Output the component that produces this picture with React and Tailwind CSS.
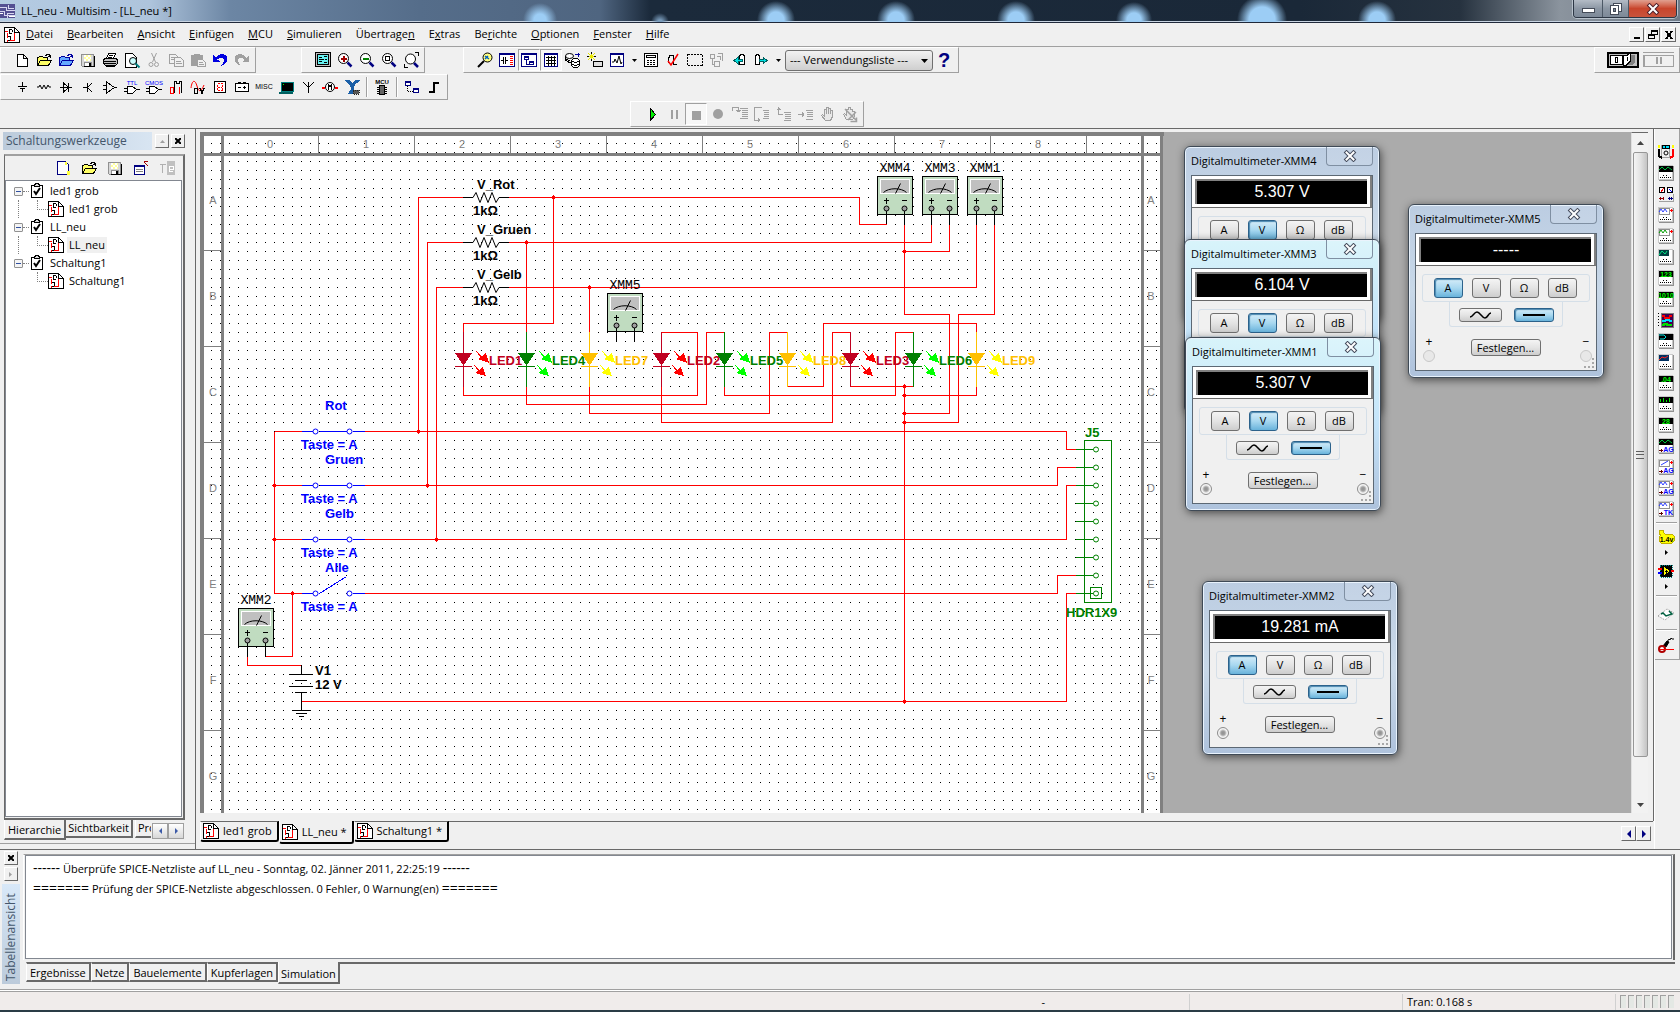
import { useState } from "react";

const RED = "#ff0000";
const BLUE = "#0000ff";
const GREEN = "#008000";

/* ---------- icons ---------- */

const Icon = ({ children, size = 16, crisp = true }) => (
  <svg
    width={size}
    height={size}
    viewBox="0 0 16 16"
    fill="none"
    stroke="#000"
    shapeRendering={crisp ? "crispEdges" : "auto"}
    aria-hidden="true"
    className="shrink-0 overflow-visible"
  >
    {children}
  </svg>
);

const SheetIcon = () => (
  <Icon>
    <path d="M.5 .5h10l5 5v10h-15z" fill="#fff" />
    <path d="M10.500 .5v5h5" />
    <path d="M1 4.500h3M3.500 6v5M10.500 6v7.500H6M3.500 13v2" stroke={RED} />
    <path d="M5 2.500h3M5.500 2v4M8.500 3v2M5 6.500h3M4 9.500h2M6.500 9v4M4 13.500h2" />
  </Icon>
);

const ClipboardIcon = () => (
  <Icon>
    <path d="M2.500 2.500h11v12h-11z" fill="#fff" strokeWidth="1" />
    <path d="M5.500 3.500v-2h1v-1h3v1h1v2z" fill="#ddd" />
    <path d="M5 8l2 3 4-6" strokeWidth="2" shapeRendering="auto" />
  </Icon>
);

const pageNew = <path d="M3.500 2.500h6l4 4v8h-10zM9.500 2.500v4h4" fill="#fff" />;

const folder = (fill, stroke) => (
  <>
    <path d="M1.500 13.500v-8h1l1-1h3l1 1h4v3" fill={fill} stroke={stroke} />
    <path d="M1.500 13.500l3-5h11l-3 5z" fill={fill} stroke={stroke} />
    <path d="M9 3.500h1v-1h3v1h1v2M12 4.500h3" stroke={stroke} />
  </>
);

const floppy = (
  <>
    <path d="M1.500 2.500h12v12h-11l-1-1z" fill="#d8d8d8" stroke="#909090" />
    <path d="M4 3h7v6H4z" fill="#ffffa0" stroke="none" />
    <path d="M4 3h2v2H4zM8 3h2v2H8zM6 5h2v2H6zM10 5h1v2h-1zM4 7h2v2H4zM8 7h2v2H8z" fill="#fff" stroke="none" />
    <path d="M4.500 14v-4h7v4" fill="#fff" stroke="#909090" />
    <path d="M9 11h2v3H9zM14 4h1v11H4v-1h10z" fill="#000" stroke="none" />
  </>
);

const lens = (inner) => (
  <>
    <circle cx="6.500" cy="6.500" r="5" fill="#fff" shapeRendering="auto" />
    {inner}
    <path d="M10.500 10.500l4 4" stroke="#000080" strokeWidth="2.500" shapeRendering="auto" />
  </>
);

const gate = (label) => (
  <>
    <path d="M3.500 7.500h5l4 3-4 4h-5zM0 9.500h3M0 12.500h3M13 10.500h3" fill="#fff" />
    <text x="8" y="6" fontSize="6" textAnchor="middle" fill={BLUE} stroke="none" fontFamily="Liberation Sans, sans-serif">
      {label}
    </text>
  </>
);

const icons = {
  newFile: pageNew,
  open: folder("#ffff66", "#000"),
  openDesign: folder("#66aaff", "#0000a0"),
  save: floppy,
  print: (
    <>
      <path d="M4.500 6.500l2-5h7l-2 5" fill="#fff" />
      <path d="M1.500 7.500l2-1h10l2 1v4l-2 2h-10l-2-2z" fill="#c0c0c0" />
      <path d="M2 9.500h12M2 11.500h12M7 3.500h4M6 5.500h4M4 14.500h9" />
    </>
  ),
  preview: (
    <>
      <path d="M1.500 1.500h7l4 4v10h-11z" fill="#fff" />
      <circle cx="9" cy="9" r="3.500" fill="#c8ffff" shapeRendering="auto" />
      <path d="M11.500 11.500l4 4" stroke="#008080" strokeWidth="2" shapeRendering="auto" />
    </>
  ),
  cut: (
    <g stroke="#a0a0a0" shapeRendering="auto">
      <path d="M5.500 1l4 9M10.500 1l-4 9" />
      <circle cx="5" cy="12.500" r="2" />
      <circle cx="10.500" cy="12.500" r="2" />
    </g>
  ),
  copy: (
    <g stroke="#a0a0a0">
      <path d="M1.500 2.500h6l2 2v7h-8zM3 5.500h4M3 7.500h4" fill="#f0f0f0" />
      <path d="M6.500 5.500h6l3 3v6h-9zM8 9.500h5M8 11.500h6" fill="#f0f0f0" />
    </g>
  ),
  paste: (
    <g stroke="#a0a0a0">
      <path d="M1.500 3.500h11v10h-11z" fill="#a0a0a0" />
      <path d="M4 2.500h6" strokeWidth="2" />
      <path d="M7.500 7.500h5l3 3v4h-8zM9 10.500h4M9 12.500h5" fill="#f0f0f0" />
    </g>
  ),
  undo: (
    <g stroke="none" fill="#0000e0">
      <path d="M1 3v7h7l-2.500-2.500C8 5 12 5 12 8c0 3-2 4-4 6 5-1 7.500-4 7.500-7C15.500 1.500 8 0 3.500 5.500z" />
    </g>
  ),
  redo: (
    <g stroke="none" fill="#a0a0a0">
      <path d="M15 3v7H8l2.500-2.500C8 5 4 5 4 8c0 3 2 4 4 6-5-1-7.500-4-7.500-7C.5 1.500 8 0 12.500 5.500z" />
    </g>
  ),
  fullView: (
    <>
      <path d="M.5 .5h15v14H.5z" fill="#c0c0c0" />
      <path d="M2.500 2.500h11v10h-11z" fill="#66f0f0" />
      <path d="M4 5.500h3M4 7.500h5M4 9.500h3M9 4.500h3M10 7.500h2M9 10.500h3" />
    </>
  ),
  zoomIn: lens(<path d="M3.500 6.500h6M6.500 3.500v6" stroke="#a00000" strokeWidth="2" />),
  zoomOut: lens(<path d="M3.500 6.500h6" stroke="#008000" strokeWidth="2" />),
  zoomArea: lens(<path d="M4.500 4.500h4v4h-4z" />),
  zoomFit: (
    <>
      <circle cx="7.500" cy="7" r="5" fill="#fff" shapeRendering="auto" />
      <path d="M11 11l4 4" stroke="#000080" strokeWidth="2.500" shapeRendering="auto" />
      <path d="M1.500 12v3h3M12 .500h3.500v3" />
    </>
  ),
  findPart: (
    <g shapeRendering="auto">
      <circle cx="10.500" cy="5.500" r="4.500" fill="#ffff80" />
      <path d="M8 4l4 3M8 7l3-3" stroke="#0060c0" strokeWidth="1.500" />
      <path d="M7 9l-6 6" strokeWidth="2" />
    </g>
  ),
  bomView: (
    <>
      <path d="M.5 1.500h15v13H.5z" fill="#fff" stroke="#000080" />
      <path d="M1 2.500h14" stroke="#000080" />
      <path d="M2 8.500h2M4.500 5v7M6.500 5v7M7 8.500h2" />
      <path d="M11 4.500h3M11 6.500h3M11 8.500h3M11 10.500h3M11 12.500h3" stroke={RED} />
    </>
  ),
  hierarchy: (
    <>
      <path d="M.5 1.500h15v13H.5z" fill="#fff" stroke="#000080" />
      <path d="M1 2.500h14" stroke="#000080" />
      <path d="M3.500 4.500h4v3h-4zM3 5.500h5M8.500 9.500h4v3h-4zM8 10.500h5M5.500 8v4h3" stroke="#000080" />
    </>
  ),
  table: (
    <>
      <path d="M1.500 1.500h13v13h-13z" fill="#fff" stroke="#000080" />
      <path d="M1 2.500h14" stroke="#000080" />
      <path d="M3 5.500h10M3 8.500h10M3 11.500h10M5.500 4v10M8.500 4v10M11.500 4v10" />
    </>
  ),
  database: (
    <>
      <ellipse cx="4.500" cy="4" rx="4" ry="2.500" fill="#fff" shapeRendering="auto" />
      <path d="M.5 4v4l3 2h3M1 7l4 2" />
      <path d="M6.500 8.500v5l2 2h4l2-2v-5l-2-2h-4zM7 9l2 1h3l2-1M7 12l2 1h3l2-1" fill="#fff" />
      <path d="M10 2.500h5M13.500 1v4" stroke="#0000a0" />
    </>
  ),
  wizard: (
    <>
      <path d="M6.500 9.500h9v5h-9z" fill="#e0e0e0" />
      <path d="M4.500 0v9M0 4.500h9M1 1l7 7M8 1l-7 7" stroke="#e8e800" />
      <path d="M4.500 0v2M4.500 7v2M0 4.500h2M7 4.500h2" />
    </>
  ),
  grapher: (
    <>
      <path d="M1.500 1.500h13v13h-13z" fill="#fff" stroke="#000080" />
      <path d="M1 2.500h14" stroke="#000080" />
      <path d="M3 10h2l1-3 2 4 2-7 2 8 1-2" shapeRendering="auto" />
    </>
  ),
  calc: (
    <>
      <path d="M1.500 1.500h13v13h-13zM3.500 3.500h9v2h-9z" fill="#fff" />
      <path d="M4 8.500h8M4 10.500h8M4 12.500h8" strokeDasharray="2 1" />
    </>
  ),
  ercCheck: (
    <>
      <path d="M3.500 11v-6h1v-2h4v3M8.500 6v6h3" />
      <path d="M3 9l3 4L13 2" stroke={RED} strokeWidth="1.500" shapeRendering="auto" />
    </>
  ),
  selectArea: <path d="M.5 2.500h15v11H.5z" strokeDasharray="2 1" />,
  gotoParent: <path d="M1.500 2.500h4v4h-4zM5.500 9.500h5v5h-5zM9 1.500h4.500v7M3.500 7v5h2M8 4.500h3v3" stroke="#a0a0a0" />,
  backAnnotate: (
    <>
      <path d="M8.500 12.500v-9h1v-1h3v1h1v9z" fill="#fff" />
      <path d="M11 7.500H7V5L3 8.500 7 12V9.500h4z" stroke="#006060" fill="#00e0e0" />
    </>
  ),
  forwardAnnotate: (
    <>
      <path d="M2.500 12.500v-9h1v-1h2v1h1v9z" fill="#fff" />
      <path d="M6 7.500h4V5l4 3.500-4 3.500V9.500H6z" stroke="#006060" fill="#00e0e0" />
    </>
  ),
  help: (
    <text x="8" y="15" fontSize="20" fontWeight="700" textAnchor="middle" fill="#000080" stroke="none" fontFamily="Liberation Sans, sans-serif">
      ?
    </text>
  ),
  source: <path d="M8.500 3v4M4 7.500h9M6 9.500h5M8.500 10v3" />,
  resistor: <path d="M1 8h2l1-2 2 4 2-4 2 4 2-4 1 2h2" shapeRendering="auto" />,
  diode: <path d="M2 8.500h12M5.500 4v9l5-4.500zM10.500 4v9" />,
  transistor: <path d="M3 8.500h4M7.500 4v9M8 8l4-4M8 9l4 4" />,
  opamp: <path d="M4.500 3v11l8-5.500zM1 6.500h4M1 10.500h4M12 8.500h3" />,
  ttl: gate("TTL"),
  cmos: gate("CMOS"),
  digital: (
    <>
      <path d="M6.500 14V2.500h2v2h3v-2h2V14" />
      <path d="M2.500 8.500h3v6h-3zM11.500 8v7" stroke={RED} strokeWidth="1.500" />
    </>
  ),
  mixed: (
    <>
      <path d="M1 9c1-8 4-9 6-2s4 6 7-1" stroke={RED} shapeRendering="auto" />
      <path d="M4.500 9.500h3v5h-3zM10 9l2 5 2-5" strokeWidth="1.500" />
    </>
  ),
  indicator: (
    <>
      <path d="M2.500 2.500h11v11h-11z" fill="#fff" />
      <path d="M5.500 4.500h5v7h-5zM6 8.500h4" stroke={RED} strokeDasharray="2 1" />
    </>
  ),
  power: <path d="M1.500 4.500h13v8h-13zM4.500 4v-1h2v1M9.500 4v-1h2v1M4 8.500h3M9 8.500h3M10.500 7v3" fill="#fff" />,
  misc: (
    <text x="8" y="10" fontSize="7" textAnchor="middle" fill="#000" stroke="none" fontFamily="Liberation Sans, sans-serif">
      MISC
    </text>
  ),
  peripherals: (
    <>
      <path d="M3 3h12v9H3z" fill="#000" stroke="#008080" />
      <path d="M1 13.500h14" stroke="#006060" strokeWidth="2" />
      <path d="M5 5.500h1" stroke="#0f0" />
    </>
  ),
  rf: <path d="M8.500 14V3M3 3l5 5M14 3l-5 5" />,
  motor: (
    <>
      <circle cx="8" cy="8" r="4.500" fill="#fff" shapeRendering="auto" />
      <path d="M6.500 11V6l1.500 2 1.500-2v5" />
      <path d="M0 8.500h3M13 8.500h3" stroke={RED} strokeWidth="2" />
    </>
  ),
  eagle: (
    <>
      <path d="M1 1l4 0 4 3 2-3h5l-1 2-3 1-2 4v5l1 2H4l3-5-1-4-4-3z" fill="#1a5fa8" stroke="none" />
      <path d="M9 11h6v4H9z" fill="#555" stroke="#222" strokeDasharray="1 1" />
    </>
  ),
  mcu: (
    <>
      <path d="M5.500 6.500h5v9h-5z" fill="#666" />
      <path d="M3 8.500h2M11 8.500h2M3 10.500h2M11 10.500h2M3 12.500h2M11 12.500h2M3 14.500h2M11 14.500h2" />
      <text x="8" y="5" fontSize="6" textAnchor="middle" fill="#000" stroke="none" fontWeight="700" fontFamily="Liberation Sans, sans-serif">
        MCU
      </text>
    </>
  ),
  hierBlock: (
    <>
      <path d="M1.500 2.500h5v4h-5zM1 3.500h6M9.500 9.500h5v4h-5zM9 10.500h6" fill="#fff" stroke="#000080" />
      <path d="M3.500 7v5.500h6" strokeDasharray="1 1" />
    </>
  ),
  bus: <path d="M3 13h5V4h5" strokeWidth="2" />,
  play: <path d="M6.500 2.500v12l5-6z" fill="#00f000" />,
  pause: <path d="M5 4h2v9H5zM10 4h2v9h-2z" fill="#a0a0a0" stroke="none" />,
  stop: <path d="M4 5h9v9H4z" fill="#a0a0a0" stroke="none" />,
  record: <circle cx="8" cy="8" r="5" fill="#a0a0a0" stroke="none" shapeRendering="auto" />,
  stepInto: <path d="M.5 5V1.500h6V6M4 4.500h5M5 5.500h3M8 2.500h8M10 4.500h6M10 6.500h6M10 8.500h6M10 10.500h6M8 12.500h8" stroke="#a0a0a0" />,
  stepOver: <path d="M8 1.500H.5v13h4M4.500 12v4M5.500 13v2M9 4.500h6M10 6.500h5M10 8.500h5M10 10.500h5M9 12.500h6" stroke="#a0a0a0" />,
  stepOut: <path d="M2.500 1v7.500h4M.5 3.500h4M1.500 2.500h2M8 6.500h7M9 8.500h6M9 10.500h6M9 12.500h6M8 14.500h7" stroke="#a0a0a0" />,
  runTo: <path d="M0 8.500h6M4.500 6v5M5.500 7v3M8 4.500h7M9 6.500h6M9 8.500h6M9 10.500h6M8 13.500h7" stroke="#a0a0a0" />,
  hand: <path d="M5.500 14.500l-4-5 1-1 2 2v-7h2v4-6h2v6-5h2v5-3h2v6l-2 4z" stroke="#a0a0a0" fill="#e8e8e8" />,
  handOff: (
    <>
      <path d="M4.500 13.500l-3-5 1-1 2 2v-6h2v-2h2v2h2v2h2v5l-2 3z" stroke="#a0a0a0" fill="#e8e8e8" />
      <path d="M3 3l11 11M14 6l-8 8M8.500 15.500h6v-4" stroke="#a0a0a0" strokeWidth="1.500" shapeRendering="auto" />
    </>
  ),
  panelNew: (
    <>
      <path d="M2.500 1.500h8l3 3v10h-11z" fill="#fff" stroke="#000080" />
      <path d="M12 11h3v4h-3zM10 2h2v3h-2z" fill="#ffff40" stroke="none" />
    </>
  ),
  newWindow: (
    <>
      <path d="M1.500 5.500h10v9h-10z" fill="#fff" stroke="#000080" />
      <path d="M1 6.500h11" stroke="#000080" />
      <path d="M3 9.500h7M3 11.500h7" stroke="#808080" />
      <path d="M15 6l-4-4M11 1.500h4" stroke="#a00000" />
    </>
  ),
  textView: (
    <>
      <path d="M8 1h8v14H8z" fill="#c0c0c0" stroke="none" />
      <path d="M1 4.500h6M3.500 5v8" stroke="#b0b0b0" />
      <path d="M10 9.500h4v-3h-4v5h4" stroke="#fff" />
    </>
  ),
};

/* ---------- toolbars ---------- */

const Band = ({ className = "", children }) => (
  <div className={`flex h-[26px] items-center border-t border-l border-r border-b border-t-white border-l-white border-r-[#a0a0a0] border-b-[#a0a0a0] pl-[10px] ${className}`}>
    {children}
  </div>
);

const ToolButton = ({ name, label, pressed }) => (
  <button
    type="button"
    title={label}
    aria-label={label}
    className={`flex h-[22px] w-[22px] shrink-0 items-center justify-center ${
      pressed ? "border border-t-[#a0a0a0] border-l-[#a0a0a0] border-r-white border-b-white bg-[#f7f7f7]" : ""
    }`}
  >
    <Icon>{icons[name]}</Icon>
  </button>
);

const DropArrow = ({ label }) => (
  <button type="button" aria-label={label} className="flex h-[22px] w-3 shrink-0 items-center justify-center">
    <svg width="5" height="3" aria-hidden="true">
      <path d="M0 0h5L2.500 3z" />
    </svg>
  </button>
);

const Separator = () => <span className="mx-[3px] h-5 w-[2px] shrink-0 border-l border-l-[#a0a0a0] border-r border-r-white" />;

const fileTools = [
  ["newFile", "Neu"], ["open", "Öffnen"], ["openDesign", "Beispiel öffnen"], ["save", "Speichern"],
  ["print", "Drucken"], ["preview", "Seitenansicht"], ["cut", "Ausschneiden"], ["copy", "Kopieren"],
  ["paste", "Einfügen"], ["undo", "Rückgängig"], ["redo", "Wiederholen"],
];
const viewTools = [
  ["fullView", "Vollbild"], ["zoomIn", "Vergrößern"], ["zoomOut", "Verkleinern"],
  ["zoomArea", "Zoombereich"], ["zoomFit", "Seite anpassen"],
];
const mainTools = [
  ["findPart", "Suchen"], ["bomView", "Stückliste"], ["hierarchy", "Schaltungswerkzeuge", true],
  ["table", "Tabellenansicht", true], ["database", "Datenbank"], ["wizard", "Assistent"], ["grapher", "Graph"],
];
const mainTools2 = [
  ["calc", "Postprozessor"], ["ercCheck", "Regelprüfung"], ["selectArea", "Bereich"],
  ["gotoParent", "Übergeordnet"], ["backAnnotate", "Rückannotation"], ["forwardAnnotate", "Vorwärtsannotation"],
];
const partTools = [
  ["source", "Quelle"], ["resistor", "Passiv"], ["diode", "Diode"], ["transistor", "Transistor"],
  ["opamp", "Analog"], ["ttl", "TTL"], ["cmos", "CMOS"], ["digital", "Digital"], ["mixed", "Gemischt"],
  ["indicator", "Anzeige"], ["power", "Leistung"], ["misc", "Sonstige"], ["peripherals", "Peripherie"],
  ["rf", "HF"], ["motor", "Elektromechanik"], ["eagle", "NI"],
];
const simTools = [
  ["play", "Start"], ["pause", "Pause"], ["stop", "Stopp", true], ["record", "Aufnahme"],
  ["stepInto", "Einzelschritt"], ["stepOver", "Prozedurschritt"], ["stepOut", "Rücksprung"],
  ["runTo", "Bis Cursor"], ["hand", "Haltepunkt"], ["handOff", "Haltepunkte entfernen"],
];

const tools = (list) => list.map(([name, label, pressed]) => <ToolButton key={name} name={name} label={label} pressed={pressed} />);

const Toolbars = () => (
  <div className="border-b border-b-[#696969]">
    <div className="flex h-[27px]">
      <Band className="w-64">{tools(fileTools)}</Band>
      <Band className="ml-[45px] w-[124px]">{tools(viewTools)}</Band>
      <Band className="ml-[38px] w-[496px]">
        {tools(mainTools)}
        <DropArrow label="Graphen" />
        {tools(mainTools2)}
        <DropArrow label="Annotationen" />
        <div className="relative ml-px flex">
          <select
            aria-label="Verwendungsliste"
            className="h-[21px] w-[148px] appearance-none rounded-[3px] border border-[#707070] bg-gradient-to-b from-[#f2f2f2] to-[#cfcfcf] pl-1 text-[11px] leading-[18px]"
          >
            <option>--- Verwendungsliste ---</option>
          </select>
          <svg width="7" height="4" className="pointer-events-none absolute top-[9px] right-[5px]" aria-hidden="true">
            <path d="M0 0h7L3.500 4z" />
          </svg>
        </div>
        <ToolButton name="help" label="Hilfe" />
      </Band>
      <Band className="ml-auto w-[86px] !pl-3">
        <button type="button" aria-label="Simulation ein/aus">
          <svg width="32" height="16" shapeRendering="crispEdges" aria-hidden="true">
            <path d="M1 1h30v14H1z" fill="#c0c0c0" stroke="#000" strokeWidth="2" />
            <path d="M3.500 3.500h12v9h-12z" fill="#fff" stroke="#000" />
            <path d="M16 3.500h4l3-3v9l-4 4h-3z" fill="#fff" stroke="#000" />
            <path d="M24 3h4v8l-3 2h-5l4-4z" fill="#808080" />
            <path d="M8.500 5.500h2v5h-2zM20.500 5v4" fill="none" stroke="#000" />
          </svg>
        </button>
        <button type="button" aria-label="Simulation anhalten" className="ml-1">
          <svg width="31" height="16" shapeRendering="crispEdges" aria-hidden="true">
            <path d="M0 .5h31M.5 3.500h30v11H.5zM1.500 4v10" fill="none" stroke="#a0a0a0" />
            <path d="M13 5h2v7h-2zM17 5h2v7h-2z" fill="#a0a0a0" />
          </svg>
        </button>
      </Band>
    </div>
    <div className="flex h-[27px]">
      <Band className="w-[448px]">
        {tools(partTools)}
        <Separator />
        <ToolButton name="mcu" label="MCU" />
        <Separator />
        <ToolButton name="hierBlock" label="Hierarchieblock" />
        <ToolButton name="bus" label="Bus" />
      </Band>
    </div>
    <div className="flex h-[27px]">
      <Band className="ml-[630px] w-[234px]">{tools(simTools)}</Band>
    </div>
  </div>
);

/* ---------- title + menu ---------- */

const CloseCross = ({ outline }) => (
  <svg width="14" height="12" aria-hidden="true">
    <path d="M3.500 2.500l7 7M10.500 2.500l-7 7" stroke={outline} strokeWidth="4" strokeLinecap="square" />
    <path d="M3.500 2.500l7 7M10.500 2.500l-7 7" stroke="#fff" strokeWidth="2" strokeLinecap="square" />
  </svg>
);

const TitleBar = () => (
  <header className="flex h-[23px] items-start border-b border-b-[#20293a] bg-[linear-gradient(90deg,#b4cbe2_0,#aec4dc_150px,#6c86a4_230px,#556d8a_420px,#4f6580_600px,#1b2a3b_650px,#1a2838_1300px,#26323f_1460px,#8b949e_1560px,#6f7b88_100%)] shadow-[inset_0_-1px_0_#c8d4e2]">
    <div className="flex h-full min-w-0 flex-1 items-center bg-[radial-gradient(circle_at_540px_20px,#9ccdf5_6px,transparent_17px),radial-gradient(circle_at_660px_22px,#7a9cbc_2px,transparent_9px),radial-gradient(circle_at_776px_20px,#9ccdf5_8px,transparent_19px),radial-gradient(circle_at_896px_20px,#9ccdf5_8px,transparent_19px),radial-gradient(circle_at_1016px_20px,#9ccdf5_8px,transparent_19px),radial-gradient(circle_at_1134px_20px,#9ccdf5_7px,transparent_18px),radial-gradient(circle_at_1262px_20px,#9ccdf5_13px,transparent_25px),radial-gradient(circle_at_1377px_20px,#9ccdf5_8px,transparent_19px)]">
      <svg width="16" height="16" shapeRendering="crispEdges" aria-hidden="true">
        <path d="M0 1h15v14H0z" fill="#544f92" />
        <path d="M0 4.500h6v3h9M0 8.500h4v4h11M8 2v3h6M7 15v-5h7" fill="none" stroke="#d8d6f0" />
        <path d="M0 10.500h3M9 13.500h6" stroke="#fff" />
      </svg>
      <h1 className="ml-[5px] pb-px text-[11px] leading-4">LL_neu - Multisim - [LL_neu *]</h1>
    </div>
    <div className="mr-[3px] flex h-[18px] shrink-0 overflow-hidden rounded-b-[4px] border border-t-0 border-[#2c3644] shadow-[0_0_0_1px_#b8c2cc]">
      <button type="button" aria-label="Minimieren" className="flex w-[29px] items-center justify-center border-r border-r-[#4c5866] bg-gradient-to-b from-[#b4bcc6] via-[#8c97a4] to-[#7d8998]">
        <span className="mt-1 h-[5px] w-[13px] border border-[#444b58] bg-white" />
      </button>
      <button type="button" aria-label="Verkleinern" className="flex w-[26px] items-center justify-center border-r border-r-[#4c5866] bg-gradient-to-b from-[#b4bcc6] via-[#8c97a4] to-[#7d8998]">
        <svg width="12" height="12" shapeRendering="crispEdges" aria-hidden="true">
          <path d="M3.500 .5h8v8h-8z" fill="#fff" stroke="#444b58" />
          <path d="M.5 2.500h8v9h-8z" fill="#fff" stroke="#444b58" />
          <path d="M3.500 5.500h2v3h-2z" fill="#7d8998" stroke="#444b58" />
        </svg>
      </button>
      <button type="button" aria-label="Schließen" className="flex w-[47px] items-center justify-center bg-gradient-to-b from-[#e0a090] via-[#c8452c] to-[#c8533c]">
        <CloseCross outline="#50202a" />
      </button>
    </div>
  </header>
);

const menus = [
  ["", "D", "atei"], ["", "B", "earbeiten"], ["", "A", "nsicht"], ["", "E", "infügen"], ["", "M", "CU"],
  ["", "S", "imulieren"], ["Übertrage", "n", ""], ["E", "x", "tras"], ["Be", "r", "ichte"],
  ["", "O", "ptionen"], ["", "F", "enster"], ["", "H", "ilfe"],
];

const raised = "border border-t-white border-l-white border-r-[#696969] border-b-[#696969] bg-[#f0f0f0]";

const MenuBar = () => (
  <nav className="flex h-6 items-center border-b border-b-[#a0a0a0] pr-1 pl-1">
    <SheetIcon />
    <div className="ml-[6px] flex gap-[14px] pb-[2px]">
      {menus.map(([before, key, after]) => (
        <button type="button" key={before + key + after} className="text-[11px] leading-4">
          {before}
          <span className="underline">{key}</span>
          {after}
        </button>
      ))}
    </div>
    <div className="ml-auto flex gap-px">
      {[
        ["Fenster minimieren", "M3 9h6", 2],
        ["Fenster wiederherstellen", "M4.500 4.500v-3h6v4h-3M4 2.500h7M1.500 5.500h6v4h-6zM1 6.500h7", 1],
        ["Fenster schließen", "M3 2l6 8M9 2l-6 8", 2],
      ].map(([label, d, w]) => (
        <button type="button" key={label} aria-label={label} className={`flex h-[15px] w-[15px] items-center justify-center ${raised}`}>
          <svg width="12" height="12" shapeRendering="crispEdges" className="shrink-0" aria-hidden="true">
            <path d={d} fill="none" stroke="#000" strokeWidth={w} />
          </svg>
        </button>
      ))}
    </div>
  </nav>
);

/* ---------- design toolbox ---------- */

const designs = ["led1 grob", "LL_neu", "Schaltung1"];

const DesignPanel = () => (
  <aside className="flex w-[196px] shrink-0 flex-col border-r border-r-[#696969] pt-[3px] pr-[10px]">
    <div className="flex h-[18px] items-center pl-[3px]">
      <h2 className="h-[18px] flex-1 bg-gradient-to-r from-[#bccbdb] to-[#d8e5f2] pl-[3px] text-[12px] leading-[17px] text-[#44566b]">
        Schaltungswerkzeuge
      </h2>
      <button type="button" aria-label="Einklappen" className={`ml-[3px] flex h-[14px] w-[14px] items-center justify-center ${raised}`}>
        <svg width="5" height="3" aria-hidden="true"><path d="M0 3h5L2.500 0z" fill="#a0a0a0" /></svg>
      </button>
      <button type="button" aria-label="Bereich schließen" className={`ml-[2px] flex h-[14px] w-[14px] items-center justify-center ${raised}`}>
        <svg width="6" height="6" aria-hidden="true"><path d="M0 0l6 6M6 0L0 6" stroke="#000" strokeWidth="2" /></svg>
      </button>
    </div>
    <div className="mt-1 ml-1 flex min-h-0 flex-1 flex-col border-t-2 border-r-2 border-b-2 border-l border-t-[#a0a0a0] border-r-[#696969] border-b-[#696969] border-l-[#696969] bg-[#f0f0f0] pr-px pb-px">
      <div className="flex h-6 shrink-0 items-center justify-end gap-[10px] pr-[7px]">
        {[["panelNew", "Neu"], ["open", "Öffnen"], ["save", "Speichern"], ["newWindow", "Neues Fenster"], ["textView", "Text"]].map(([n, l]) => (
          <button type="button" key={l} aria-label={l}>
            <Icon>{icons[n]}</Icon>
          </button>
        ))}
      </div>
      <ul className="flex-1 overflow-hidden border border-[#828790] bg-white pt-px text-[12px]">
        {designs.map((name, i) => (
          <li key={name}>
            <div className="flex h-[18px] items-center pl-2">
              <button type="button" aria-label={`${name} einklappen`} className="flex h-[9px] w-[9px] items-center justify-center rounded-[1px] border border-[#919191] bg-[#f4f4f4]">
                <span className="h-px w-[5px] bg-[#3050a0]" />
              </button>
              <span className="w-[6px] border-b border-dotted border-[#808080]" />
              <ClipboardIcon />
              <span className="ml-[5px] pb-px text-[11px] leading-4">{name}</span>
            </div>
            <div className="flex h-[18px] pl-3">
              <span className={`w-[19px] border-dotted border-[#808080] ${i < 2 ? "border-l" : ""}`} />
              <span className="mb-[8px] w-[11px] border-b border-l border-dotted border-[#808080]" />
              <span className="flex items-center">
                <SheetIcon />
                <button type="button" className={`ml-[3px] px-[2px] text-[11px] leading-[16px] ${i === 1 ? "bg-[#f0f0f0]" : ""}`}>
                  {name}
                </button>
              </span>
            </div>
          </li>
        ))}
      </ul>
    </div>
    <div className="mr-px flex h-[23px] items-start pl-1">
      <button type="button" className="h-5 border-r-2 border-b-2 border-l border-r-[#696969] border-b-[#696969] border-l-white px-[3px] text-[11px] leading-[20px]">Hierarchie</button>
      <button type="button" className="h-[18px] border-r-2 border-b-2 border-r-[#696969] border-b-[#696969] px-[2px] text-[11px] leading-4">Sichtbarkeit</button>
      <button type="button" className="ml-[2px] h-[18px] w-4 overflow-hidden border-b-2 border-l border-b-[#696969] border-l-white pl-[2px] text-left text-[11px] leading-4">Pro</button>
      <div className="mt-[3px] ml-auto flex">
        {["M5 0v6L2 3z", "M2 0v6l3-3z"].map((d, i) => (
          <button type="button" key={d} aria-label={i ? "Weiter" : "Zurück"} className="flex h-4 w-4 items-center justify-center border border-[#a0a0a0] bg-gradient-to-b from-white to-[#d8d8d8]">
            <svg width="7" height="6" aria-hidden="true"><path d={d} fill="#3c5aa8" /></svg>
          </button>
        ))}
      </div>
    </div>
    <div className="-mr-[10px] mb-[5px] border-b border-b-[#a0a0a0]" />
  </aside>
);

/* ---------- schematic ---------- */

const Meter = ({ x, y, name }) => (
  <g>
    <text x={x + 18} y={y - 4} fontSize="13" fontWeight="400" textAnchor="middle" fontFamily="Liberation Mono, monospace" fill="#000">{name}</text>
    <g transform="translate(.5 .5)" stroke="#000">
      <path d={`M${x} ${y}h35v38h-35z`} fill="#c0dcc0" />
      <path d={`M${x + 3} ${y + 3}h29v14h-29z`} fill="#c0c0c0" stroke="#fff" />
      <path d={`M${x + 6} ${y + 16}c5-5 18-5 23 0M${x + 18} ${y + 17}l5-10`} fill="none" shapeRendering="auto" />
      <path d={`M${x + 6} ${y + 24}h5M${x + 8.5} ${y + 21}v6M${x + 24} ${y + 24}h5`} fill="none" />
      <path d={`M${x + 9} ${y + 32}v15M${x + 27} ${y + 32}v15`} />
      <circle cx={x + 9} cy={y + 32} r="2.500" fill="#a0a0a0" shapeRendering="auto" />
      <circle cx={x + 27} cy={y + 32} r="2.500" fill="#a0a0a0" shapeRendering="auto" />
    </g>
  </g>
);

const Led = ({ x, name, color, light }) => (
  <g>
    <path d={`M${x + 0.5} 332v55M${x - 8} 366.500h17`} stroke={color} />
    <path d={`M${x - 8} 353h17l-8.500 13z`} fill={color} />
    <path d={`M${x + 13} 351l7 8M${x + 11} 365l7 8`} stroke={light} />
    <path d={`M${x + 15} 359l8-6 3 10zM${x + 12} 373l8-6 3 9z`} fill={light} />
    <text x={x + 26} y="365" fill={color}>{name}</text>
  </g>
);

const rot = ["#c00020", "#ff0000"];
const gruen = ["#008000", "#00ff00"];
const gelb = ["#ffc000", "#ffff00"];
const leds = [
  [463, "LED1", rot], [526, "LED4", gruen], [589, "LED7", gelb],
  [661, "LED2", rot], [724, "LED5", gruen], [787, "LED8", gelb],
  [850, "LED3", rot], [913, "LED6", gruen], [976, "LED9", gelb],
];

const wires = [
  "M418 431V197H463M508 197H859V224H886",
  "M427 485V242H463M508 242H931V224",
  "M436 539V287H463M508 287H976V224",
  "M949 224V251H904M904 224V314H949V413H904",
  "M994 224V314H958V422H904",
  "M553 197V323H463V332M526 242V332M589 287V332",
  "M463 386V395H697V332H661",
  "M526 386V404H706V332H724",
  "M589 386V413H769V332H787",
  "M661 386V422H832V332H850",
  "M724 386V395H895V332H913",
  "M787 386H823V323H976V332",
  "M850 386H913M976 386V395H904M904 386V701",
  "M274 431V593M274 431H301M274 485H301M274 539H301M274 593H301",
  "M364 431H1066V449H1075M364 485H1057V467H1075",
  "M364 539H1066V485H1075M364 593H1057V575H1075",
  "M301 701H1066V593H1075",
  "M265 656H292V593M247 656V665H301",
];

const junctions = [
  [553, 197], [526, 242], [589, 287], [904, 251], [904, 386], [904, 395], [904, 413], [904, 422], [904, 701],
  [418, 431], [427, 485], [436, 539], [274, 485], [274, 539], [292, 593],
];

const switches = [["Rot", 431], ["Gruen", 485], ["Gelb", 539], ["Alle", 593]];
const resistors = [["V_Rot", 197], ["V_Gruen", 242], ["V_Gelb", 287]];

const Schematic = () => (
  <svg
    width="964"
    height="720"
    viewBox="200 132 964 720"
    className="block shrink-0 bg-white"
    shapeRendering="crispEdges"
    fontFamily="Liberation Sans, Arial, sans-serif"
    fontSize="13"
    fontWeight="700"
    fill="none"
    role="img"
    aria-label="Schaltplan LL_neu"
  >
    <defs>
      <pattern id="grid" x="211" y="143" width="9" height="9" patternUnits="userSpaceOnUse">
        <rect width="1" height="1" fill="#000" />
      </pattern>
    </defs>
    <rect x="200" y="132" width="964" height="720" fill="url(#grid)" />

    {/* frame and rulers */}
    <path d="M200 132h964v4H200zM200 132h4v720h-4zM1160 132h3v720h-3zM221 136h3v716h-3zM1141 136h3v716h-3zM204 153h956v3H204z" fill="#808080" />
    <path d="M1163 136h1v716h-1z" fill="#ababab" />
    {Array.from({ length: 9 }, (_, i) => (
      <g key={i}>
        <path d={`M${318.5 + i * 96} 136v17`} stroke="#808080" />
        <text x={270 + i * 96} y="148" fill="#808080" fontWeight="400" textAnchor="middle" fontSize="11">{i}</text>
      </g>
    ))}
    {["A", "B", "C", "D", "E", "F", "G"].map((letter, i) => (
      <g key={letter} fill="#808080" fontWeight="400" fontSize="11" textAnchor="middle">
        <path d={`M204 ${250.5 + i * 96}h17M1144 ${250.5 + i * 96}h16`} stroke="#808080" />
        <text x="213" y={204 + i * 96}>{letter}</text>
        <text x="1151" y={204 + i * 96}>{letter}</text>
      </g>
    ))}

    <g transform="translate(.5 .5)" stroke={RED}>
      {wires.map((d) => <path key={d} d={d} />)}
    </g>
    {junctions.map(([x, y]) => (
      <path key={`${x}-${y}`} d={`M${x} ${y - 2}h1v1h1v1h1v1h-1v1h-1v1h-1v-1h-1v-1h-1v-1h1v-1h1z`} fill={RED} />
    ))}

    {resistors.map(([name, y]) => (
      <g key={name} fill="#000">
        <path d={`M463 ${y + 0.5}h10l3-5 4 10 4-10 4 10 4-10 4 10 3-5h9`} fill="none" stroke="#000" shapeRendering="auto" />
        <text x="477" y={y - 8}>{name}</text>
        <text x="473" y={y + 18}>1kΩ</text>
      </g>
    ))}

    {leds.map(([x, name, [color, light]]) => <Led key={name} x={x} name={name} color={color} light={light} />)}

    <Meter x={877} y={176} name="XMM4" />
    <Meter x={922} y={176} name="XMM3" />
    <Meter x={967} y={176} name="XMM1" />
    <Meter x={607} y={293} name="XMM5" />
    <Meter x={238} y={608} name="XMM2" />

    {switches.map(([name, y]) => (
      <g key={name} fill={BLUE}>
        <g transform="translate(.5 .5)" stroke={BLUE} fill="none">
          <path d={`M301 ${y}h12M352 ${y}h12`} />
          {name === "Alle" ? <path d={`M319 ${y}L346 ${y - 17}`} /> : <path d={`M319 ${y}h27`} />}
          <circle cx="315" cy={y} r="2.500" fill="#fff" shapeRendering="auto" />
          <circle cx="349" cy={y} r="2.500" fill="#fff" shapeRendering="auto" />
        </g>
        <text x="325" y={y - 21}>{name}</text>
        <text x="301" y={y + 18}>Taste = A</text>
      </g>
    ))}

    {/* battery and ground */}
    <g fill="#000">
      <path d="M301.500 665v9M289 674.500h24M295 680.500h12M289 686.500h24M295 692.500h12M301.500 692v18M292 710.500h19M296 713.500h11M299 716.500h5" stroke="#000" />
      <text x="315" y="675">V1</text>
      <text x="315" y="689">12 V</text>
    </g>

    {/* header */}
    <g fill={GREEN}>
      <g transform="translate(.5 .5)" stroke={GREEN} fill="none">
        <path d="M1084 440h27v162h-27zM1090 587h11v11h-11z" />
        {Array.from({ length: 9 }, (_, i) => (
          <g key={i}>
            <path d={`M1075 ${449 + i * 18}h18`} />
            <circle cx="1095.500" cy={449 + i * 18} r="2.500" fill="#fff" shapeRendering="auto" />
          </g>
        ))}
      </g>
      <text x="1085" y="437">J5</text>
      <text x="1066" y="617">HDR1X9</text>
    </g>
  </svg>
);

/* ---------- multimeter windows ---------- */

const meterButton = (active) =>
  active
    ? "border-[#2c628b] bg-gradient-to-b from-[#d5ecf8] via-[#a8d8f0] to-[#68b3db] shadow-[inset_1px_1px_1px_#4a88b0]"
    : "border-[#707070] bg-gradient-to-b from-[#f4f4f4] via-[#e4e4e4] to-[#cdcdcd]";

const Terminal = ({ id, sign, name, live }) => (
  <label htmlFor={id} className="flex w-3 flex-col items-center text-[12px] leading-3">
    {sign}
    <input
      id={id}
      type="radio"
      defaultChecked={live}
      name={id}
      aria-label={`${name} ${sign}`}
      className="mt-[2px] h-3 w-3 appearance-none rounded-full border border-[#c8c8c8] bg-[#e8e8e8] checked:border-[#8c8c8c] checked:bg-[radial-gradient(circle,#909090_0,#a0a0a0_2px,#f4f4f4_4px)]"
    />
  </label>
);

const Multimeter = ({ name, value, mode, live, className, frame = "from-[#bccde2] via-[#c8d8e8] to-[#aec2dc]" }) => {
  const [active, setActive] = useState(mode);
  const [wave, setWave] = useState("dc");
  return (
    <section className={`absolute flex h-[174px] w-[196px] flex-col rounded-[6px] border border-[#3f4a56] bg-gradient-to-b px-[6px] pb-[6px] shadow-[inset_0_0_0_1px_#e8f2fc,1px_2px_8px_#00000090] ${frame} ${className}`}>
      <div className="flex h-7 shrink-0 items-start justify-between">
        <h3 className="pt-[6px] text-[11px] leading-4 whitespace-nowrap">Digitalmultimeter-{name}</h3>
        <button type="button" aria-label={`${name} schließen`} className="flex h-[19px] w-[47px] items-center justify-center rounded-b-[4px] border border-t-0 border-[#7f8fa2] bg-white/10">
          <CloseCross outline="#444b5c" />
        </button>
      </div>
      <div className="flex flex-1 flex-col border border-[#5c6874] bg-[#f0f0f0]">
        <div className="border-r-2 border-b border-r-[#808080] border-b-[#696969] bg-white p-[3px]">
          <output className="block h-[25px] border-t-2 border-l-2 border-[#808080] bg-black text-center font-[Liberation_Sans,Arial,sans-serif] text-[16px] leading-[21px] text-white">
            {value}
          </output>
        </div>
        <div className="mx-[6px] mt-[8px] flex h-7 items-center justify-center gap-[9px] rounded-[3px] border border-[#d5dfe8] pr-[2px]">
          {["A", "V", "Ω", "dB"].map((m) => (
            <button
              type="button"
              key={m}
              aria-pressed={active === m}
              onClick={() => setActive(m)}
              className={`h-5 w-[29px] rounded-[3px] border text-[11px] leading-[18px] ${meterButton(active === m)}`}
            >
              {m}
            </button>
          ))}
        </div>
        <div className="ml-[33px] flex h-[25px] w-[114px] items-center justify-center gap-3 rounded-b-[3px] border border-t-0 border-[#d5dfe8] pt-px">
          <button type="button" aria-label="AC" aria-pressed={wave === "ac"} onClick={() => setWave("ac")} className={`flex h-[14px] w-[43px] items-center justify-center rounded-[3px] border ${meterButton(wave === "ac")}`}>
            <svg width="23" height="9" aria-hidden="true"><path d="M1 7c3 0 4-5 7-5s5 6 8 6 3-5 6-5" fill="none" stroke="#000" strokeWidth="1.500" /></svg>
          </button>
          <button type="button" aria-label="DC" aria-pressed={wave === "dc"} onClick={() => setWave("dc")} className={`flex h-[14px] w-10 items-center justify-center rounded-[3px] border ${meterButton(wave === "dc")}`}>
            <span className="h-[2px] w-[22px] bg-black" />
          </button>
        </div>
        <div className="mt-[9px] flex items-start justify-between pr-1 pl-[7px]">
          <Terminal id={`${name}-plus`} sign="+" name={name} live={live} />
          <button type="button" className={`mt-[3px] mr-1 h-[17px] w-[70px] rounded-[3px] border text-[11px] leading-[14px] ${meterButton(false)}`}>
            Festlegen...
          </button>
          <Terminal id={`${name}-minus`} sign="−" name={name} live={live} />
        </div>
        <svg width="12" height="11" className="absolute right-[8px] bottom-[8px]" aria-hidden="true">
          <path d="M9 0h2v2H9zM9 4h2v2H9zM9 8h2v2H9zM5 8h2v2H5zM1 8h2v2H1z" fill="#a8a8a8" />
        </svg>
      </div>
    </section>
  );
};

const glow = "from-[#d8f4fa] via-[#c4e4fa] to-[#aec2dc]";

/* ---------- workspace ---------- */

const Workspace = () => (
  <div className="relative flex min-h-0 flex-1 overflow-hidden bg-[#ababab]">
    <Schematic />
    <Multimeter name="XMM4" value="5.307 V" mode="V" live className="top-[14px] left-[984px]" />
    <Multimeter name="XMM3" value="6.104 V" mode="V" live className="top-[107px] left-[984px]" frame={glow} />
    <Multimeter name="XMM1" value="5.307 V" mode="V" live className="top-[205px] left-[985px]" frame={glow} />
    <Multimeter name="XMM5" value="-----" mode="A" className="top-[72px] left-[1208px]" />
    <Multimeter name="XMM2" value="19.281 mA" mode="A" live className="top-[449px] left-[1002px]" />
    <div className="ml-auto flex w-[17px] flex-col items-center border-t border-l border-t-[#696969] border-l-[#e0e0e0] bg-[#f2f2f2]">
      <button type="button" aria-label="Nach oben" className="flex h-[19px] w-full items-center justify-center">
        <svg width="7" height="4" aria-hidden="true"><path d="M0 4h7L3.500 0z" fill="#444" /></svg>
      </button>
      <div className="flex w-[15px] flex-1 items-center justify-center rounded-[2px] border border-[#979797] bg-gradient-to-r from-[#f4f4f4] via-[#e2e2e2] to-[#c4c4c4]">
        <span className="flex h-2 w-2 flex-col justify-between">
          <i className="h-px bg-[#606060]" />
          <i className="h-px bg-[#606060]" />
          <i className="h-px bg-[#606060]" />
        </span>
      </div>
      <button type="button" aria-label="Nach unten" className="flex h-14 w-full items-end justify-center pb-[6px]">
        <svg width="7" height="4" aria-hidden="true"><path d="M0 0h7L3.500 4z" fill="#444" /></svg>
      </button>
    </div>
  </div>
);

const sheets = ["led1 grob", "LL_neu *", "Schaltung1 *"];

const SheetTabs = () => (
  <div className="flex h-7 items-start">
    <div className="flex pl-1">
      {sheets.map((s, i) => (
        <button
          type="button"
          key={s}
          className={`flex items-center gap-1 rounded-b-[3px] border-r-2 border-b-2 border-l border-black border-l-white pr-[5px] pl-[2px] text-[11px] leading-4 ${
            i === 1 ? "h-[23px]" : "h-[21px] border-t border-t-[#696969]"
          }`}
        >
          <SheetIcon />
          {s}
        </button>
      ))}
    </div>
    <div className="h-px flex-1 bg-[#696969]" />
    <div className="mt-[5px] mr-[3px] -ml-8 flex">
      {["M6 0v8L2 4z", "M2 0v8l4-4z"].map((d, i) => (
        <button type="button" key={d} aria-label={i ? "Nächstes Blatt" : "Vorheriges Blatt"} className={`flex h-[15px] w-[15px] items-center justify-center ${raised}`}>
          <svg width="8" height="8" aria-hidden="true"><path d={d} fill="#000080" /></svg>
        </button>
      ))}
    </div>
  </div>
);

/* ---------- instruments ---------- */

const instruments = [
  { label: "Multimeter", kind: "dmm" },
  { label: "Funktionsgenerator", trace: "M1 5l3-3 3 3 3-3 4 3", color: "#00c040" },
  { label: "Wattmeter", kind: "watt" },
  { label: "Oszilloskop", bg: "#fff", trace: "M1 5l2-3 2 3 2-3 2 3", color: "#3040ff" },
  { label: "4-Kanal-Oszilloskop", bg: "#fff", trace: "M1 5l2-3 2 3 2-3 2 3", color: "#00a000" },
  { label: "Bode-Plotter", bg: "#004040", trace: "M1 6l3-4 3 3 2-3", color: "#00e080" },
  { label: "Frequenzzähler", text: "123" },
  { label: "Bitmustergenerator", text: "1010" },
  { label: "Logikanalysator", kind: "logic" },
  { label: "Logikkonverter", trace: "M1 2h5l2 2-2 2H2", color: "#00e0e0" },
  { label: "IV-Analysator", bg: "#003060", trace: "M1 6l3-3 3 1 3-2", color: "#ff2020" },
  { label: "Klirrfaktormesser", text: ".04" },
  { label: "Spektrumanalysator", trace: "M2.500 6V3M5.500 6V2M8.500 6V4M11.500 6V2", color: "#00e000" },
  { label: "Netzwerkanalysator", text: "28" },
  { label: "Agilent-Funktionsgenerator", trace: "M1 5l3-3 3 3 3-3 4 3", color: "#00c040", tag: "AG" },
  { label: "Agilent-Multimeter", bg: "#fff", trace: "M3 6l7-4", color: "#3040ff", tag: "AG" },
  { label: "Agilent-Oszilloskop", bg: "#fff", trace: "M1 5l2-3 2 3 2-3 2 3", color: "#3040ff", tag: "AG" },
  { label: "Tektronix-Oszilloskop", bg: "#fff", trace: "M1 5l2-3 2 3 2-3 2 3", color: "#3040ff", tag: "TK" },
];

const InstrumentArt = ({ kind, bg = "#000", trace, color, text, tag }) => {
  if (kind === "dmm")
    return (
      <>
        <path d="M3.500 1.500h8v12h-8z" fill="#f0f0f0" stroke="#a0a0a0" />
        <path d="M4 1h8v4H4z" fill="#000" stroke="none" />
        <path d="M5 3h2M8 3h3" stroke="#00e0ff" strokeWidth="2" />
        <circle cx="8" cy="9" r="2" shapeRendering="auto" />
        <path d="M1 5v7l3 2" strokeWidth="2" />
        <path d="M15 5v7l-3 2" stroke={RED} strokeWidth="2" />
        <path d="M1 1v3M15 1v3" stroke="#ffff00" strokeWidth="2" />
      </>
    );
  if (kind === "watt")
    return (
      <>
        <path d="M1.500 1.500h5v5h-5zM9.500 1.500h5v5h-5z" fill="#fff" />
        <path d="M3 6l3-4" stroke={RED} />
        <path d="M11 3l3 3" stroke={BLUE} />
        <path d="M1 12.500h5M2.500 11v3M5.500 11v3" stroke="#900000" />
        <path d="M10 12.500h5M11.500 11v3M13.500 11v3" stroke="#000080" />
        <path d="M15.500 8v7.500H1" stroke="#a0a0a0" />
      </>
    );
  if (kind === "logic")
    return (
      <>
        <path d="M3 1h12v14H3z" fill="#400050" stroke="#808080" />
        <path d="M4 4h2l1 2h4l1-2h2" stroke={RED} strokeWidth="2" />
        <path d="M4 9h3l1-1h3l1 1h2" stroke="#00e0ff" strokeWidth="2" />
        <path d="M4 13h2v-1h3v1h5" stroke="#00e000" strokeWidth="2" />
        <path d="M.5 1v14" strokeDasharray="1 2" />
      </>
    );
  return (
    <>
      <path d="M.5 .5h14v14H.5z" fill="#fff" stroke="#c8c8c8" />
      <path d="M15.500 1v14.500H1" stroke="#909090" />
      <path d={bg === "#000" ? "M1 1h14v6H1z" : "M1 1h10v6H1z"} fill={bg} stroke={bg === "#fff" ? "#909090" : "none"} />
      {trace && <path d={trace} stroke={color} shapeRendering="auto" />}
      {bg === "#fff" && <path d="M12 3.500h3M13.500 2v3" stroke={RED} />}
      {text && (
        <text x="8" y="7" fontSize="7" fontWeight="700" textAnchor="middle" fill="#00ff00" stroke="none" fontFamily="Liberation Sans, sans-serif">{text}</text>
      )}
      {tag ? (
        <>
          <path d="M1 12.500h4M3.500 11v3" stroke="#600000" />
          <text x="10.500" y="14" fontSize="7" fontWeight="700" textAnchor="middle" fill={BLUE} stroke="none" fontFamily="Liberation Sans, sans-serif">{tag}</text>
        </>
      ) : (
        <>
          <path d="M5 10.500h6" strokeDasharray="1 2" />
          <path d="M2 12.500h12" strokeDasharray="1 1" />
        </>
      )}
    </>
  );
};

const MiniArrow = ({ label }) => (
  <button type="button" aria-label={label} className="flex h-[14px] w-full items-center justify-center">
    <svg width="3" height="5" aria-hidden="true"><path d="M0 0v5l3-2.500z" /></svg>
  </button>
);

const InstrumentBar = () => (
  <aside className="w-[26px] shrink-0 border-l border-l-white">
    <div className="flex flex-col items-center border-r border-b border-r-[#a0a0a0] border-b-[#a0a0a0] pt-3 pr-[2px]">
      {instruments.map((it) => (
        <button type="button" key={it.label} title={it.label} aria-label={it.label} className="flex h-[21px] w-[22px] items-center justify-center">
          <Icon><InstrumentArt {...it} /></Icon>
        </button>
      ))}
      <span className="mt-[3px] h-[2px] w-[21px] border-t border-t-[#a0a0a0] border-b border-b-white" />
      <button type="button" aria-label="Messfühler" className="mt-1 flex h-[17px] items-center">
        <Icon>
          <path d="M1 1h5l-1 2 2 2h7l2 2v5l-2 2H3l-2-2V8l2-2-1-1-1 1z" fill="#ffff00" stroke="#c0b000" />
          <text x="8.500" y="12.500" fontSize="7" fontWeight="700" textAnchor="middle" fill="#000" stroke="none" fontFamily="Liberation Sans, sans-serif">1.4v</text>
        </Icon>
      </button>
      <MiniArrow label="Messfühler-Auswahl" />
      <button type="button" aria-label="LabVIEW-Instrumente" className="mt-1 flex h-4 items-center">
        <Icon>
          <path d="M2 2h12v12H2z" fill="#000" stroke="#008080" strokeDasharray="1 1" />
          <path d="M5.500 3v10l7-5z" fill="#ffff00" />
          <path d="M0 6h4" stroke={RED} strokeWidth="2" />
          <path d="M0 10h4" stroke={BLUE} strokeWidth="2" />
          <path d="M13 8h3" stroke={RED} strokeWidth="2" />
          <path d="M7 8.500h3M8.500 7v3" />
        </Icon>
      </button>
      <MiniArrow label="LabVIEW-Auswahl" />
      <span className="mt-[2px] h-[2px] w-[21px] border-t border-t-[#a0a0a0] border-b border-b-white" />
      <button type="button" aria-label="NI ELVISmx" className="mt-[9px] flex h-4 items-center">
        <Icon crisp={false}>
          <path d="M0 10l9-7 7 4-9 7z" fill="#fff" stroke="#909090" strokeDasharray="1 1" />
          <path d="M3 8l2-1 3 3 6-2-3-3" stroke="#006040" strokeWidth="1.500" />
        </Icon>
      </button>
      <span className="mt-[7px] h-[2px] w-[21px] border-t border-t-[#a0a0a0] border-b border-b-white" />
      <button type="button" aria-label="Stromzange" className="my-[6px] flex h-4 items-center">
        <Icon crisp={false}>
          <path d="M9 5l2-3 1 1 1-2 1 1h2" />
          <path d="M5 9l4-5 2 1-3 5z" fill="#000" />
          <circle cx="4" cy="12" r="3" stroke="#b00000" strokeWidth="2" fill="#fff" />
          <path d="M2 12.500h14" stroke={RED} />
        </Icon>
      </button>
    </div>
  </aside>
);

/* ---------- bottom spreadsheet view ---------- */

const resultTabs = ["Ergebnisse", "Netze", "Bauelemente", "Kupferlagen", "Simulation"];

const Rule = ({ children }) => <span className="text-[14px]">{children}</span>;

const ResultsPanel = () => (
  <section className="flex h-[140px] shrink-0 border-t border-t-[#696969] pr-[5px]">
    <div className="flex w-[23px] shrink-0 flex-col items-center pt-px pr-[2px]">
      <button type="button" aria-label="Tabellenansicht schließen" className={`flex h-[14px] w-[14px] shrink-0 items-center justify-center ${raised}`}>
        <svg width="6" height="6" aria-hidden="true"><path d="M0 0l6 6M6 0L0 6" stroke="#000" strokeWidth="2" /></svg>
      </button>
      <button type="button" aria-label="Tabellenansicht einklappen" className={`mt-[2px] flex h-[14px] w-[14px] shrink-0 items-center justify-center ${raised}`}>
        <svg width="3" height="5" aria-hidden="true"><path d="M0 0v5l3-2.500z" fill="#a0a0a0" /></svg>
      </button>
      <h2 className="mt-[3px] flex h-[100px] w-[18px] rotate-180 items-center bg-gradient-to-t from-[#d8e8f8] to-[#bccbdb] pt-[3px] text-[12px] leading-[18px] whitespace-nowrap text-[#44566b] [writing-mode:vertical-rl]">
        Tabellenansicht
      </h2>
    </div>
    <div className="flex min-w-0 flex-1 flex-col pt-[4px]">
      <div className="border-t border-r-2 border-l border-t-[#a0a0a0] border-r-[#696969] border-l-white pr-px pb-px pl-px">
        <div className="h-[104px] border border-[#828790] bg-white pt-[2px] pl-[7px] text-[11px] leading-[19px] whitespace-pre">
          <p><Rule>------</Rule> Überprüfe SPICE-Netzliste auf LL_neu - Sonntag, 02. Jänner 2011, 22:25:19 <Rule>------</Rule></p>
          <p><Rule>=======</Rule> Prüfung der SPICE-Netzliste abgeschlossen. 0 Fehler, 0 Warnung(en) <Rule>=======</Rule></p>
        </div>
      </div>
      <div className="flex h-6 items-start pt-[2px]">
        <div className="flex pl-[3px]">
          {resultTabs.map((t, i) => (
            <button
              type="button"
              key={t}
              className={`border-r-2 border-b-2 border-l border-r-[#696969] border-b-[#696969] border-l-white text-[11px] ${
                i === 4 ? "h-[22px] px-[2px] leading-[24px]" : "h-5 border-t-2 border-t-[#696969] px-[3px] leading-[18px]"
              }`}
            >
              {t}
            </button>
          ))}
        </div>
        <div className="h-[2px] flex-1 bg-[#696969]" />
      </div>
    </div>
  </section>
);

const StatusBar = () => (
  <footer className="flex h-[23px] shrink-0 items-center border-t border-b-2 border-t-[#a0a0a0] border-b-[#2a3c46] bg-[#f0eceb] pt-[3px] text-[11px] leading-4 shadow-[inset_0_1px_0_#fff,inset_0_2px_0_#a0a0a0]">
    <span className="flex-1 pr-[144px] text-right">-</span>
    <span className="h-4 w-[213px] border-l border-l-[#d0d0d0]" />
    <span className="h-4 w-[213px] border-l border-l-[#d0d0d0] pl-1">Tran: 0.168 s</span>
    <span className="flex h-4 w-[65px] items-center gap-[2px] border-l border-l-[#d0d0d0] pl-1">
      {Array.from({ length: 7 }, (_, i) => (
        <i key={i} className="h-[13px] w-[6px] border-t border-l border-[#a0a0a0] bg-[#e4e8e4]" />
      ))}
    </span>
  </footer>
);

const App = () => (
  <div className="flex h-screen flex-col overflow-hidden bg-[#f0f0f0] font-[Open_Sans,Noto_Sans,sans-serif] text-black">
    <TitleBar />
    <MenuBar />
    <Toolbars />
    <div className="flex min-h-0 flex-1">
      <DesignPanel />
      <main className="flex min-w-0 flex-1 flex-col">
        <div className="flex min-h-0 flex-1 flex-col border-r border-r-[#696969] pt-[3px] pr-[5px] pb-2 pl-1">
          <Workspace />
        </div>
        <SheetTabs />
      </main>
      <InstrumentBar />
    </div>
    <ResultsPanel />
    <StatusBar />
  </div>
);

export default App;
